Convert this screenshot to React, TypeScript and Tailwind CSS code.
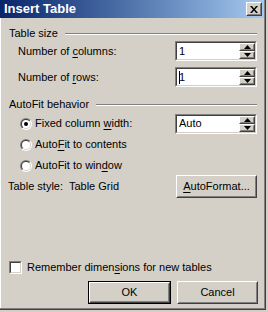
import React from 'react';

const face = 'bg-[#d4d0c8]';

function U({ children }: { children: React.ReactNode }) {
  return <span className="underline underline-offset-[2px]">{children}</span>;
}

function Raised({ children, className = '' }: { children?: React.ReactNode; className?: string }) {
  return (
    <div className={`border border-t-white border-l-white border-r-[#404040] border-b-[#404040] ${className}`}>
      <div className={`h-full w-full border border-t-[#d4d0c8] border-l-[#d4d0c8] border-r-[#808080] border-b-[#808080] ${face} flex items-center justify-center`}>
        {children}
      </div>
    </div>
  );
}

function Arrow({ up }: { up?: boolean }) {
  return (
    <svg width="7" height="4" viewBox="0 0 7 4">
      {up ? <polygon points="3.5,0 7,4 0,4" fill="#000" /> : <polygon points="0,0 7,0 3.5,4" fill="#000" />}
    </svg>
  );
}

function SpinBox({ value, caret }: { value: string; caret?: boolean }) {
  return (
    <div className="w-[82px] h-[20px] border border-t-[#808080] border-l-[#808080] border-r-white border-b-white">
      <div className="h-full flex bg-white border border-t-[#404040] border-l-[#404040] border-r-[#d4d0c8] border-b-[#d4d0c8]">
        <div className="flex-1 flex items-center pl-[2px] text-[11px] text-[#000]">
          {caret && <span className="w-px h-[13px] bg-black mr-[-1px]" />}
          {value}
        </div>
        <div className="w-[16px] flex flex-col">
          <Raised className="h-[8px]"><Arrow up /></Raised>
          <Raised className="h-[8px]"><Arrow /></Raised>
        </div>
      </div>
    </div>
  );
}

function GroupHeader({ title }: { title: string }) {
  return (
    <div className="h-[13px] flex items-center pl-[8px] pr-[7px]">
      <span className="text-[11px] leading-[13px] mr-[7px]">{title}</span>
      <div className="flex-1 h-[2px] border-t border-t-[#808080] border-b border-b-white" />
    </div>
  );
}

function Radio({ checked }: { checked?: boolean }) {
  return (
    <svg width="12" height="12" viewBox="0 0 12 12" className="shrink-0">
      <defs>
        <linearGradient id="ro" x1="0" y1="0" x2="1" y2="1">
          <stop offset="0.5" stopColor="#808080" />
          <stop offset="0.5" stopColor="#ffffff" />
        </linearGradient>
        <linearGradient id="ri" x1="0" y1="0" x2="1" y2="1">
          <stop offset="0.5" stopColor="#404040" />
          <stop offset="0.5" stopColor="#d4d0c8" />
        </linearGradient>
      </defs>
      <circle cx="6" cy="6" r="6" fill="url(#ro)" />
      <circle cx="6" cy="6" r="5" fill="url(#ri)" />
      <circle cx="6" cy="6" r="4" fill="#fff" />
      {checked && <circle cx="6" cy="6" r="2" fill="#000" />}
    </svg>
  );
}

export default function App() {
  return (
    <div className={`w-[268px] h-[312px] ${face} font-['Tahoma','Liberation_Sans',sans-serif] text-black text-[11px]`}>
      <div className="w-[266px] h-[310px] border-r border-b border-r-[#404040] border-b-[#404040]">
        <div className="h-full flex flex-col border-r border-b border-r-[#808080] border-b-[#808080]">
          {/* title bar */}
          <div className="h-[18px] flex items-center bg-gradient-to-r from-[#0a246a] to-[#a6caf0] pl-[4px] pr-[2px]">
            <span className="flex-1 text-white font-bold text-[13px] leading-[18px]">Insert Table</span>
            <Raised className="w-[16px] h-[14px]">
              <svg width="8" height="7" viewBox="0 0 8 7">
                <path d="M0 0h2l2 2.5L6 0h2L5 3.5 8 7H6L4 4.5 2 7H0l3-3.5z" fill="#000" />
              </svg>
            </Raised>
          </div>

          <div className="flex-1 flex flex-col border-l border-l-white">
            <div className="mt-[9px]">
              <GroupHeader title="Table size" />
            </div>
            <div className="mt-[1px] h-[20px] flex items-center pl-[17px] pr-[7px]">
              <span className="flex-1">Number of <U>c</U>olumns:</span>
              <SpinBox value="1" />
            </div>
            <div className="mt-[6px] h-[20px] flex items-center pl-[17px] pr-[7px]">
              <span className="flex-1">Number of <U>r</U>ows:</span>
              <SpinBox value="1" caret />
            </div>

            <div className="mt-[11px]">
              <GroupHeader title="AutoFit behavior" />
            </div>
            <div className="mt-[2px] h-[21px] flex items-center pl-[19px] pr-[7px]">
              <Radio checked />
              <span className="flex-1 ml-[3px]">Fixed column <U>w</U>idth:</span>
              <SpinBox value="Auto" />
            </div>
            <div className="h-[21px] flex items-center pl-[19px]">
              <Radio />
              <span className="ml-[3px]">Auto<U>F</U>it to contents</span>
            </div>
            <div className="h-[21px] flex items-center pl-[19px]">
              <Radio />
              <span className="ml-[3px]">AutoFit to win<U>d</U>ow</span>
            </div>
            <div className="h-[21px] flex items-center pl-[7px] pr-[7px]">
              <span className="flex-1">Table style:&nbsp; Table Grid</span>
              <Raised className="w-[81px] h-[23px]">
                <span><U>A</U>utoFormat...</span>
              </Raised>
            </div>

            <div className="mt-[64px] h-[13px] flex items-center pl-[8px]">
              <div className="w-[13px] h-[13px] border border-t-[#808080] border-l-[#808080] border-r-white border-b-white">
                <div className="h-full bg-white border border-t-[#404040] border-l-[#404040] border-r-[#d4d0c8] border-b-[#d4d0c8]" />
              </div>
              <span className="ml-[5px]">Remember dimen<U>s</U>ions for new tables</span>
            </div>

            <div className="mt-[7px] flex justify-end gap-[6px] pr-[6px]">
              <div className="border border-black">
                <Raised className="w-[81px] h-[21px]">OK</Raised>
              </div>
              <Raised className="w-[81px] h-[23px]">Cancel</Raised>
            </div>
          </div>
        </div>
      </div>
    </div>
  );
}
